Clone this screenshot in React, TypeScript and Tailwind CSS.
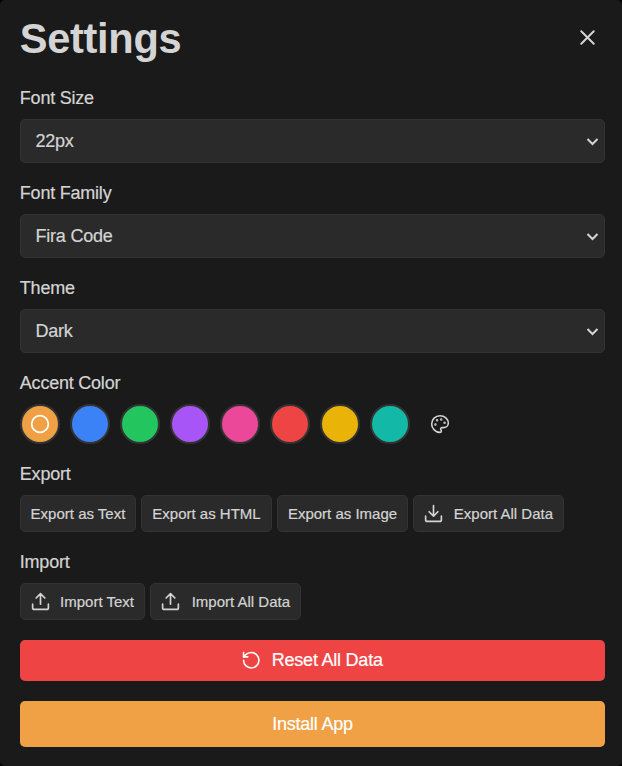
import React from "react";
import { Circle, X } from "lucide-react";

const colors = [
  "bg-[#f0a045]",
  "bg-[#3b82f6]",
  "bg-[#22c55e]",
  "bg-[#a855f7]",
  "bg-[#ec4899]",
  "bg-[#ef4444]",
  "bg-[#eab308]",
  "bg-[#14b8a6]",
];

function Icon({ size, children }: { size: number; children: React.ReactNode }) {
  return (
    <svg width={size} height={size} viewBox="0 0 24 24" fill="none" stroke="currentColor" strokeWidth="1.9" strokeLinecap="round" strokeLinejoin="round" className="shrink-0">
      {children}
    </svg>
  );
}

function TrayIcon({ up = false }: { up?: boolean }) {
  return (
    <Icon size={21}>
      <path d="M21 15v4a2 2 0 0 1-2 2H5a2 2 0 0 1-2-2v-4" />
      <path d={up ? "m17 8-5-5-5 5M12 3v12" : "m7 10 5 5 5-5M12 15V3"} />
    </Icon>
  );
}

function Label({ children }: { children: React.ReactNode }) {
  return <div className="-ml-[0.2px] h-5 text-[18px] leading-5 tracking-[-0.22px]">{children}</div>;
}

function SelectField({ label, value }: { label: string; value: string }) {
  return (
    <div className="mb-5 flex flex-col">
      <Label>{label}</Label>
      <button className="mt-[11px] flex h-11 items-center justify-between rounded-[5px] border border-[#333333] bg-[#2a2a2a] pr-[5px] pl-[14.5px] text-[18px] tracking-[-0.22px]">
        <span>{value}</span>
        <svg width="13" height="9" viewBox="0 0 13 9" fill="none" stroke="currentColor" strokeWidth="2">
          <path d="M1.5 2 6.5 7 11.5 2" />
        </svg>
      </button>
    </div>
  );
}

function ActionButton({ children, icon, width }: { children: string; icon?: React.ReactNode; width: string }) {
  return (
    <button className={`flex h-[37px] items-center rounded-[5px] border border-[#333333] bg-[#2a2a2a] text-[15px] whitespace-nowrap ${icon ? "justify-between pr-[10px] pl-[9px]" : "justify-center"} ${width}`}>
      {icon}
      <span className="pt-px">{children}</span>
    </button>
  );
}

export default function App() {
  return (
    <div className="h-[766px] w-[622px] bg-black">
      <main className="flex h-full flex-col rounded-[5px] bg-[#1a1a1a] pr-[17px] pl-5 font-['Liberation_Sans',Arial,sans-serif] text-[#d4d4d4] [-webkit-text-stroke:0.2px_currentColor]">
        <header className="flex h-[88px] items-start justify-between pt-[15px]">
          <h1 className="-ml-[0.3px] text-[41.6px] leading-[48px] font-bold tracking-[-0.3px] [-webkit-text-stroke:0]">Settings</h1>
          <button className="mt-[10px] mr-[5px]" aria-label="Close">
            <X size={25} strokeWidth={1.9} />
          </button>
        </header>
        <SelectField label="Font Size" value="22px" />
        <SelectField label="Font Family" value="Fira Code" />
        <SelectField label="Theme" value="Dark" />
        <Label>Accent Color</Label>
        <div className="mt-[11px] flex h-10 gap-[10px]">
          {colors.map((color, index) => (
            <button key={color} className={`flex size-10 items-center justify-center rounded-full border-2 border-[#333333] text-white ${color}`}>
              {index === 0 && <Circle size={20} strokeWidth={2} />}
            </button>
          ))}
          <button className="flex size-10 items-center justify-center" aria-label="Custom color">
            <Icon size={20}>
              <g fill="currentColor">
                <circle cx="13.5" cy="6.5" r=".5" />
                <circle cx="17.5" cy="10.5" r=".5" />
                <circle cx="8.5" cy="7.5" r=".5" />
                <circle cx="6.5" cy="12.5" r=".5" />
              </g>
              <path d="M12 2C6.5 2 2 6.5 2 12s4.5 10 10 10c.926 0 1.648-.746 1.648-1.688 0-.437-.18-.835-.437-1.125-.29-.289-.438-.652-.438-1.125a1.64 1.64 0 0 1 1.668-1.668h1.996c3.051 0 5.555-2.503 5.555-5.554C21.965 6.012 17.461 2 12 2z" />
            </Icon>
          </button>
        </div>
        <div className="mt-5">
          <Label>Export</Label>
          <div className="mt-[11px] flex gap-[5px]">
            <ActionButton width="w-[116px]">Export as Text</ActionButton>
            <ActionButton width="w-[131px]">Export as HTML</ActionButton>
            <ActionButton width="w-[131px]">Export as Image</ActionButton>
            <ActionButton width="w-[151px]" icon={<TrayIcon />}>Export All Data</ActionButton>
          </div>
        </div>
        <div className="mt-5">
          <Label>Import</Label>
          <div className="mt-[11px] flex gap-[5px]">
            <ActionButton width="w-[125px]" icon={<TrayIcon up />}>Import Text</ActionButton>
            <ActionButton width="w-[151px]" icon={<TrayIcon up />}>Import All Data</ActionButton>
          </div>
        </div>
        <button className="mt-5 flex h-[41px] shrink-0 items-center justify-center gap-[10px] rounded-[5px] bg-[#ef4444] pr-px text-[18px] tracking-[-0.22px] text-white">
          <Icon size={20.5}>
            <path d="M3 12a9 9 0 1 0 9-9 9.75 9.75 0 0 0-6.74 2.74L3 8" />
            <path d="M3 3v5h5" />
          </Icon>
          <span>Reset All Data</span>
        </button>
        <button className="mt-5 h-[46px] shrink-0 rounded-[5px] bg-[#f0a045] text-[18px] tracking-[-0.22px] text-white">Install App</button>
      </main>
    </div>
  );
}
